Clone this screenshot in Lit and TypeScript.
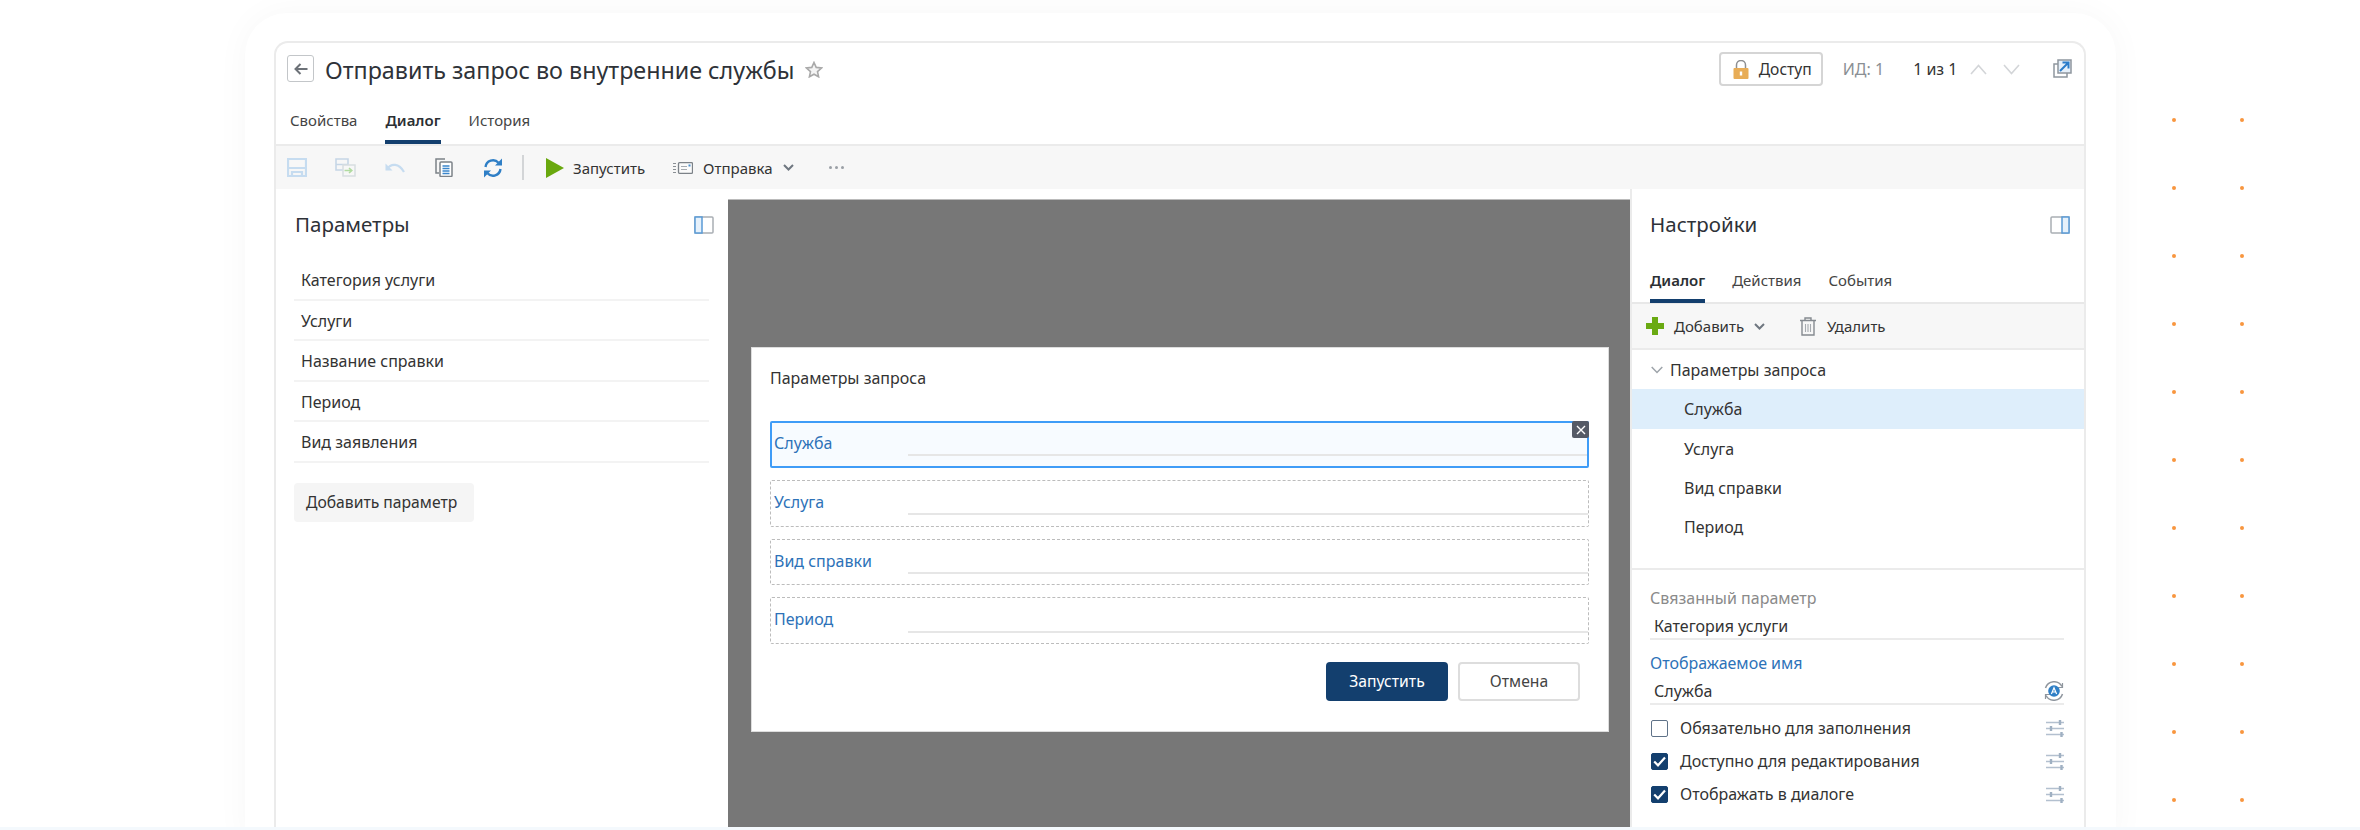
import { LitElement, html, css, svg } from "lit";
import { customElement } from "lit/decorators.js";

const ic = (w: number, h: number, body: unknown) =>
  html`<svg class="ic" width=${w} height=${h} viewBox="0 0 ${w} ${h}" fill="none">${body}</svg>`;

const chevron = (w = 11, c = "#6f7780") =>
  ic(w, 7, svg`<path d="M1 1l${(w - 2) / 2} 4.5L${w - 1} 1" stroke=${c} stroke-width="2"/>`);

const panelIcon = (left: boolean) =>
  ic(20, 18, svg`
    <rect x="1" y="1" width="18" height="16" rx="1" stroke="#a9aeb4" stroke-width="1.5"/>
    ${left
      ? svg`<rect x="1" y="1" width="7" height="16" fill="#e6f1fb" stroke="#5a9ad6" stroke-width="1.5"/>`
      : svg`<rect x="12" y="1" width="7" height="16" fill="#e6f1fb" stroke="#5a9ad6" stroke-width="1.5"/>`}
  `);

const sliders = ic(18, 18, svg`
  <g stroke="#b3c0cf" stroke-width="1.6">
    <path d="M0 3.5h18M0 9.5h18M0 15.5h18"/>
    <path d="M14 1v5M5 7v5M15.5 13v5" stroke-width="2.4" stroke="#9fb0c2"/>
  </g>`);

const I = {
  back: ic(14, 12, svg`<path d="M13.5 6H2M6.5 1L1.5 6l5 5" stroke="#6d7278" stroke-width="2"/>`),
  star: ic(18, 17, svg`<path d="M9 1.5l2.2 4.9 5.3.6-4 3.6 1.1 5.2L9 13.2l-4.6 2.6 1.1-5.2-4-3.6 5.3-.6z" stroke="#a9a9a9" stroke-width="1.6" fill="#f4f4f4"/>`),
  lock: ic(16, 19, svg`
    <path d="M3.5 9V5a4.5 4.5 0 0 1 9 0v4" stroke="#8d8f92" stroke-width="1.5"/>
    <rect x="0.5" y="8" width="15" height="11" rx="1" fill="#e8ad57"/>
    <path d="M8 11.5v4" stroke="#fff" stroke-width="2.4"/>`),
  up: ic(17, 11, svg`<path d="M1 10l7.5-8.5L16 10" stroke="#d3d5d8" stroke-width="1.6"/>`),
  down: ic(17, 11, svg`<path d="M1 1l7.5 8.5L16 1" stroke="#d3d5d8" stroke-width="1.6"/>`),
  expand: ic(19, 19, svg`
    <path d="M5 5H1v13h13v-4" stroke="#8f969e" stroke-width="1.5"/>
    <rect x="5" y="1" width="13" height="13" stroke="#8f969e" stroke-width="1.5" fill="#e6f0fa"/>
    <path d="M7 12l8-8M9.5 3.5h6v6" stroke="#2b7cc9" stroke-width="2"/>`),
  save: ic(20, 19, svg`<path d="M1 1h18v17H1zM1 10h18M5 18v-4h10v4" stroke="#c6dcf0" stroke-width="2.2"/>`),
  saveAs: ic(21, 19, svg`
    <path d="M1 1h12v11H1zM1 6.5h12" stroke="#c6d6e6" stroke-width="1.6"/>
    <path d="M8 7h12v11H8z" stroke="#d8dee1" stroke-width="1.5" fill="#f7f7f7"/>
    <path d="M9.5 12.5h7M14 10l2.8 2.5L14 15" stroke="#b0dba0" stroke-width="1.6"/>`),
  undo: ic(20, 11, svg`<path d="M2 7c4-6 12-6 17 3" stroke="#c6dcf0" stroke-width="2.2"/><path d="M0.5 1.5v7h7z" fill="#c6dcf0"/>`),
  copy: ic(18, 19, svg`
    <path d="M10 1H1v14h3" stroke="#7c8288" stroke-width="1.5"/>
    <rect x="5" y="4" width="12" height="14.5" rx="1" stroke="#7c8288" stroke-width="1.5" fill="#fff"/>
    <path d="M7.5 8h7M7.5 10.5h7M7.5 13h7M7.5 15.5h7" stroke="#3b86cb" stroke-width="1.3"/>`),
  refresh: ic(20, 20, svg`
    <path d="M2.5 9a7.5 7.5 0 0 1 13-4.2M17.5 11a7.5 7.5 0 0 1-13 4.2" stroke="#2f7fc6" stroke-width="2.4"/>
    <path d="M19 0.5v7h-7zM1 19.5v-7h7z" fill="#2f7fc6"/>`),
  play: ic(18, 20, svg`<path d="M0 0l18 10L0 20z" fill="#69a80e"/>`),
  send: ic(20, 12, svg`
    <path d="M0 1.5h3M0 4.5h3M0 7.5h3M0 10.5h3" stroke="#8a8f94" stroke-width="1.2"/>
    <rect x="5.5" y="0.7" width="14" height="10.6" rx="1" stroke="#7c8288" stroke-width="1.3" fill="#fbfbfb"/>
    <path d="M8 4.5h6M8 7.5h6" stroke="#a5abb1" stroke-width="1.1"/>
    <rect x="15.5" y="2.5" width="2" height="2" fill="#4b90d0"/>`),
  dots: ic(15, 3, svg`<g fill="#9a9fa5"><circle cx="1.5" cy="1.5" r="1.5"/><circle cx="7.5" cy="1.5" r="1.5"/><circle cx="13.5" cy="1.5" r="1.5"/></g>`),
  plus: ic(18, 18, svg`<path d="M9 0v18M0 9h18" stroke="#6aaa12" stroke-width="6"/>`),
  trash: ic(16, 19, svg`
    <path d="M0 3.5h16M5 3V1h6v2" stroke="#858a90" stroke-width="1.4"/>
    <path d="M2 4v14h12V4" stroke="#858a90" stroke-width="1.4"/>
    <path d="M5.5 7v8M8 7v8M10.5 7v8" stroke="#a6abb0" stroke-width="1.1"/>`),
  tree: ic(12, 8, svg`<path d="M0.7 1l5.3 5.5L11.3 1" stroke="#9ea4aa" stroke-width="1.5"/>`),
  auto: ic(20, 20, svg`
    <path d="M1.5 7A9 9 0 0 1 18 5.5M18.5 13A9 9 0 0 1 2 14.5" stroke="#8f969e" stroke-width="1.5"/>
    <path d="M18.5 2v4.5h-4.5M1.5 18v-4.5h4.5" stroke="#8f969e" stroke-width="1.2"/>
    <circle cx="10" cy="10" r="5.8" fill="#2f7fc6"/>
    <path d="M7.4 13l2.6-6.2 2.6 6.2M8.3 11h3.4" stroke="#fff" stroke-width="1.2"/>`),
  check: ic(13, 11, svg`<path d="M1.2 5.5l3.8 3.8L12 1.5" stroke="#fff" stroke-width="2.2"/>`),
  close: ic(10, 10, svg`<path d="M1 1l8 8M9 1l-8 8" stroke="#fff" stroke-width="1.4"/>`),
};

@customElement("app-root")
export class AppRoot extends LitElement {
  static styles = css`
    :host {
      display: block;
      width: 2360px;
      height: 830px;
      overflow: hidden;
      background: #fff;
      font-family: "Noto Sans", "Open Sans", sans-serif;
      font-size: 16px;
      color: #333;
    }
    * { box-sizing: border-box; }
    .ic { display: block; flex: none; }
    .root { display: grid; grid-template-rows: 827px 3px; height: 830px; }
    .strip { background: #f4f9fd; }
    .top { display: flex; align-items: flex-start; padding-left: 245px; min-height: 0; overflow: hidden; }
    .frame {
      width: 1871px; height: 830px; margin-top: 13px; padding: 28px 0 0 29px; background: #fff;
      border-radius: 42px 42px 0 0; box-shadow: 0 0 34px rgba(0, 0, 0, 0.035); flex: none;
    }
    .dots {
      display: grid; grid-template-columns: 4px 4px; grid-auto-rows: 4px; gap: 64px;
      margin: 118px 0 0 56px;
    }
    .dots i { background: #f8963f; border-radius: 50%; }
    .card {
      width: 1812px; height: 800px; border: 2px solid #ebebeb; border-bottom: 0;
      border-radius: 14px 14px 0 0; background: #fff; display: flex; flex-direction: column;
    }
    .head { display: flex; align-items: flex-start; height: 57px; padding: 0 12px 0 11px; }
    .backbtn {
      width: 27px; height: 27px; border: 1.5px solid #c3c6c9; border-radius: 3px;
      display: flex; align-items: center; justify-content: center; margin-top: 12px;
    }
    .title { font-size: 23.3px; margin: 12px 0 0 11px; color: #2e3238; white-space: nowrap; line-height: 30px; }
    .star { margin: 18px 0 0 11px; }
    .grow { flex: 1; }
    .access {
      width: 104px; height: 34px; border: 2px solid #d5d5d5; border-radius: 4px; margin-top: 9px;
      display: flex; align-items: center; padding-left: 12px; gap: 10px; font-size: 15.6px;
    }
    .hid { color: #8a8f94; margin: 16px 0 0 20px; line-height: 20px; }
    .pos { color: #333; margin: 16px 0 0 29px; line-height: 20px; }
    .m-up { margin: 21px 0 0 12.5px; }
    .m-down { margin: 21px 0 0 16px; }
    .m-exp { margin: 16px 0 0 33px; }
    .tabs { display: flex; gap: 28px; padding-left: 14px; height: 44px; align-items: flex-end; }
    .tab { height: 44px; line-height: 40px; border-bottom: 4px solid transparent; font-size: 15px; color: #444; white-space: nowrap; }
    .tab.on { border-bottom-color: #133f6e; font-weight: 600; color: #2b2f33; }
    .bar { height: 45px; border-top: 2px solid #ebebeb; background: #f7f7f7; display: flex; align-items: center; padding-left: 11px; font-size: 15px; white-space: nowrap; }
    .sep { width: 2px; height: 25px; background: #d3d5d7; }
    .main { flex: 1; display: flex; min-height: 0; }
    .left { width: 452px; flex: none; }
    .ptitle { display: flex; justify-content: space-between; align-items: center; height: 71px; padding: 0 14px 0 19px; font-size: 20.5px; color: #2e3238; }
    .ptitle span { margin-top: -1px; }
    .list { margin: 0 19px 0 18px; }
    .row { height: 40.5px; border-bottom: 2px solid #f3f3f3; padding-left: 7px; line-height: 41px; }
    .addp {
      width: 180px; height: 39px; margin: 20px 0 0 18px; background: #f5f5f5; border-radius: 4px;
      padding-left: 12px; line-height: 39px; white-space: nowrap; font-size: 15.7px;
    }
    .canvas { width: 902px; flex: none; margin-top: 10px; background: #777; padding: 147px 21px 0 23px; border-top: 1px solid #bbb; }
    .dialog { height: 385px; background: #fff; border: 1px solid #ddd; padding: 20px 19px 0 18px; }
    .dtitle { line-height: 20px; height: 20px; margin-bottom: 33px; }
    .fields { display: flex; flex-direction: column; gap: 12px; }
    .field { position: relative; height: 46.8px; border: 1px dashed #bcbcbc; border-radius: 2px; display: flex; padding-left: 3px; color: #2d72b8; line-height: 42px; }
    .field.on { border: 2px solid #3f9cf7; background: #f7fbff; padding-left: 2px; line-height: 40px; }
    .field .lab { width: 134px; flex: none; }
    .field .ln { flex: 1; height: 2px; background: #e6e6e6; margin-top: 32.5px; }
    .field.on .ln { margin-top: 31px; }
    .x {
      position: absolute; top: -2px; right: -2px; width: 17px; height: 17px; background: #555a66;
      border-radius: 2px; display: flex; align-items: center; justify-content: center;
    }
    .btns { display: flex; justify-content: flex-end; gap: 10px; margin-top: 18px; padding-right: 9px; }
    .btn { width: 122px; height: 39px; border-radius: 4px; text-align: center; line-height: 38px; font-size: 15.7px; }
    .btn.p { background: #133f6e; color: #fff; }
    .btn.s { border: 2px solid #ddd; color: #444; line-height: 35px; }
    .right { flex: 1; border-left: 2px solid #ebebeb; min-width: 0; }
    .right .ptitle { padding-left: 18px; }
    .rtabs { display: flex; gap: 27px; padding-left: 18px; height: 44px; border-bottom: 2px solid #e8e8e8; }
    .rtabs .tab { height: 43px; line-height: 40px; }
    .rbar { height: 46px; border-bottom: 2px solid #ebebeb; background: #f7f7f7; display: flex; align-items: center; padding-left: 14px; white-space: nowrap; font-size: 15px; }
    .tree { border-bottom: 2px solid #ebebeb; height: 220px; }
    .tr { height: 39.3px; line-height: 40px; padding-left: 52px; }
    .tr.on { background: #deeefb; }
    .tr.root-node { display: flex; align-items: center; padding-left: 19px; gap: 7px; }
    .form { padding: 18px 20px 0 18px; }
    .lbl { height: 20px; line-height: 20px; color: #8a8a8a; }
    .lbl.b { color: #2d72b8; margin-top: 13px; }
    .val { height: 32px; border-bottom: 2px solid #ebebeb; padding: 5px 0 0 4px; line-height: 26px; display: flex; justify-content: space-between; align-items: center; }
    .checks { margin-top: 6.5px; }
    .ck { height: 33px; display: flex; align-items: center; padding-left: 1px; gap: 12px; }
    .box { width: 17px; height: 17px; border-radius: 2px; border: 1.5px solid #5f7288; display: flex; align-items: center; justify-content: center; flex: none; }
    .box.on { background: #133f6e; border-color: #133f6e; }
    .ck .ic:last-child { margin-left: auto; }
    .box .ic:last-child { margin-left: 0; }
    .sp { display: block; }
  `;

  private ml(px: number, t: unknown) {
    return html`<span class="sp" style="margin-left:${px}px">${t}</span>`;
  }

  render() {
    const dots = Array.from({ length: 22 }, () => html`<i></i>`);
    return html`
      <div class="root">
        <div class="top">
          <div class="frame">
            <div class="card">
              <div class="head">
                <div class="backbtn">${I.back}</div>
                <div class="title">Отправить запрос во внутренние службы</div>
                <div class="star">${I.star}</div>
                <div class="grow"></div>
                <div class="access">${I.lock}<span>Доступ</span></div>
                <div class="hid">ИД: 1</div>
                <div class="pos">1 из 1</div>
                <div class="m-up">${I.up}</div>
                <div class="m-down">${I.down}</div>
                <div class="m-exp">${I.expand}</div>
              </div>
              <div class="tabs">
                <div class="tab">Свойства</div>
                <div class="tab on">Диалог</div>
                <div class="tab">История</div>
              </div>
              <div class="bar">
                ${I.save}${this.ml(28, I.saveAs)}${this.ml(29, I.undo)}${this.ml(30, I.copy)}${this.ml(30, I.refresh)}
                ${this.ml(19, html`<div class="sep"></div>`)}${this.ml(22, I.play)}${this.ml(9, "Запустить")}
                ${this.ml(28, I.send)}${this.ml(10, "Отправка")}${this.ml(10, chevron())}${this.ml(35, I.dots)}
              </div>
              <div class="main">
                <div class="left">
                  <div class="ptitle"><span>Параметры</span>${panelIcon(true)}</div>
                  <div class="list">
                    ${["Категория услуги", "Услуги", "Название справки", "Период", "Вид заявления"].map(
                      (t) => html`<div class="row">${t}</div>`
                    )}
                  </div>
                  <div class="addp">Добавить параметр</div>
                </div>
                <div class="canvas">
                  <div class="dialog">
                    <div class="dtitle">Параметры запроса</div>
                    <div class="fields">
                      <div class="field on">
                        <div class="lab">Служба</div><div class="ln"></div>
                        <div class="x">${I.close}</div>
                      </div>
                      ${["Услуга", "Вид справки", "Период"].map(
                        (t) => html`<div class="field"><div class="lab">${t}</div><div class="ln"></div></div>`
                      )}
                    </div>
                    <div class="btns">
                      <div class="btn p">Запустить</div>
                      <div class="btn s">Отмена</div>
                    </div>
                  </div>
                </div>
                <div class="right">
                  <div class="ptitle"><span>Настройки</span>${panelIcon(false)}</div>
                  <div class="rtabs">
                    <div class="tab on">Диалог</div>
                    <div class="tab">Действия</div>
                    <div class="tab">События</div>
                  </div>
                  <div class="rbar">
                    ${I.plus}${this.ml(10, "Добавить")}${this.ml(10, chevron())}${this.ml(35, I.trash)}${this.ml(11, "Удалить")}
                  </div>
                  <div class="tree">
                    <div class="tr root-node">${I.tree}<span>Параметры запроса</span></div>
                    <div class="tr on">Служба</div>
                    <div class="tr">Услуга</div>
                    <div class="tr">Вид справки</div>
                    <div class="tr">Период</div>
                  </div>
                  <div class="form">
                    <div class="lbl">Связанный параметр</div>
                    <div class="val">Категория услуги</div>
                    <div class="lbl b">Отображаемое имя</div>
                    <div class="val"><span>Служба</span>${I.auto}</div>
                    <div class="checks">
                      <div class="ck"><div class="box"></div><span>Обязательно для заполнения</span>${sliders}</div>
                      <div class="ck"><div class="box on">${I.check}</div><span>Доступно для редактирования</span>${sliders}</div>
                      <div class="ck"><div class="box on">${I.check}</div><span>Отображать в диалоге</span>${sliders}</div>
                    </div>
                  </div>
                </div>
              </div>
            </div>
          </div>
          <div class="dots">${dots}</div>
        </div>
        <div class="strip"></div>
      </div>
    `;
  }
}
